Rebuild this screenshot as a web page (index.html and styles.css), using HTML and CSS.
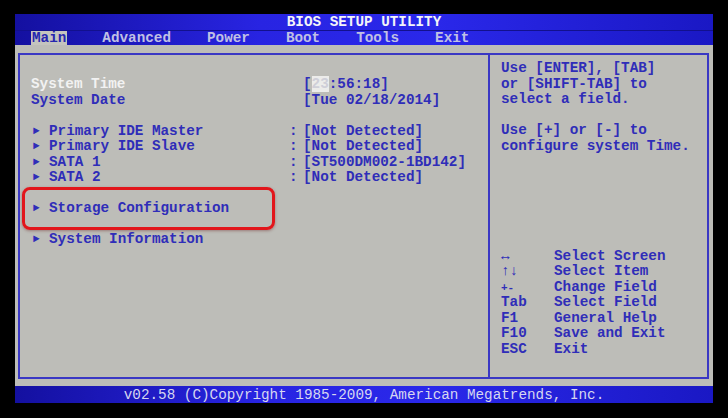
FILE: index.html
```html
<!DOCTYPE html>
<html>

<head>
    <title>BIOS Setup Utility</title>
    <link rel="stylesheet" href="styles.css">
</head>

<body>
    <div class="screen">
        <div class="title">BIOS SETUP UTILITY</div>
        <div class="menu">
            <span class="tab active">Main</span>
            <span class="tab">Advanced</span>
            <span class="tab">Power</span>
            <span class="tab">Boot</span>
            <span class="tab">Tools</span>
            <span class="tab">Exit</span>
        </div>

        <div class="main">
            <div class="frame">
                <div class="settings">
                    <div class="row">
                        <span class="label current">System Time</span>
                        <span class="sep"></span>
                        <span class="value">[<span class="field">23</span>:56:18]</span>
                    </div>
                    <div class="row">
                        <span class="label">System Date</span>
                        <span class="sep"></span>
                        <span class="value">[Tue 02/18/2014]</span>
                    </div>
                    <div class="gap"></div>
                    <div class="row">
                        <span class="label"><span class="arrow">&#9658;</span>Primary IDE Master</span>
                        <span class="sep">:</span>
                        <span class="value">[Not Detected]</span>
                    </div>
                    <div class="row">
                        <span class="label"><span class="arrow">&#9658;</span>Primary IDE Slave</span>
                        <span class="sep">:</span>
                        <span class="value">[Not Detected]</span>
                    </div>
                    <div class="row">
                        <span class="label"><span class="arrow">&#9658;</span>SATA 1</span>
                        <span class="sep">:</span>
                        <span class="value">[ST500DM002-1BD142]</span>
                    </div>
                    <div class="row">
                        <span class="label"><span class="arrow">&#9658;</span>SATA 2</span>
                        <span class="sep">:</span>
                        <span class="value">[Not Detected]</span>
                    </div>
                    <div class="gap"></div>
                    <div class="row marked">
                        <span class="label"><span class="arrow">&#9658;</span>Storage Configuration</span>
                        <span class="circle"></span>
                    </div>
                    <div class="gap"></div>
                    <div class="row">
                        <span class="label"><span class="arrow">&#9658;</span>System Information</span>
                    </div>
                </div>

                <div class="help">
                    <p>Use [ENTER], [TAB]<br>or [SHIFT-TAB] to<br>select a field.</p>
                    <p>Use [+] or [-] to<br>configure system Time.</p>

                    <ul class="keys">
                        <li><span class="key">&#8596;</span>Select Screen</li>
                        <li><span class="key">&#8593;&#8595;</span>Select Item</li>
                        <li><span class="key small">+-</span>Change Field</li>
                        <li><span class="key">Tab</span>Select Field</li>
                        <li><span class="key">F1</span>General Help</li>
                        <li><span class="key">F10</span>Save and Exit</li>
                        <li><span class="key">ESC</span>Exit</li>
                    </ul>
                </div>
            </div>
        </div>

        <div class="footer">v02.58 (C)Copyright 1985-2009, American Megatrends, Inc.</div>
    </div>
</body>

</html>
```

FILE: styles.css
```css
body {
    margin: 0;
    background-color: #000;
    font-family: "Liberation Mono", "DejaVu Sans Mono", monospace;
    font-weight: bold;
    font-size: 14.3px;
}

.screen {
    width: 698px;
    margin: 14px 0 0 15px;
}

.title,
.menu,
.footer {
    background: linear-gradient(90deg, #1410a0 0%, #2824e2 35%, #2a28ea 60%, #1a18c4 100%);
}

.title {
    height: 16px;
    line-height: 17px;
    text-align: center;
    color: #f4f4f8;
}

.menu {
    display: flex;
    gap: 34px;
    height: 15px;
    line-height: 15px;
    padding-left: 16px;
    color: #c0c0e4;
    border-top: 1px solid #12108e;
    box-sizing: border-box;
}

.tab {
    padding: 0 1px;
}

.tab.active {
    background-color: #c4c4be;
    color: #2626b0;
}

.main {
    height: 341px;
    padding: 8px 4px 7px 3px;
    box-sizing: border-box;
    background-color: #bdbdb8;
    display: flex;
}

.frame {
    flex: 1;
    display: flex;
    border: 2px solid #3a38c4;
    line-height: 15.5px;
    color: #2f2db8;
}

.settings {
    width: 470px;
    box-sizing: border-box;
    border-right: 2px solid #3a38c4;
    padding: 22px 0 0 11px;
}

.row {
    display: flex;
    height: 15.5px;
    white-space: pre;
    position: relative;
}

.gap {
    height: 15.5px;
}

.label {
    width: 258px;
}

.label.current {
    color: #f2f2f2;
}

.sep {
    width: 14px;
}

.arrow {
    display: inline-block;
    width: 16px;
    padding-left: 2px;
    font-size: 11px;
    vertical-align: 1px;
}

.field {
    background-color: #ececea;
    color: #cfcfd8;
}

.circle {
    position: absolute;
    left: -9px;
    top: -14px;
    width: 253px;
    height: 43px;
    box-sizing: border-box;
    border: 3px solid #e2161b;
    border-radius: 8px;
    box-shadow: 0 1px 3px rgba(90, 0, 0, 0.35);
}

.help {
    flex: 1;
    display: flex;
    flex-direction: column;
    padding: 6px 0 20px 11px;
}

.help p {
    margin: 0 0 15.5px 0;
}

.keys {
    list-style: none;
    margin: auto 0 0 0;
    padding: 0;
}

.keys li {
    height: 15.5px;
}

.key {
    display: inline-block;
    width: 53px;
}

.key.small {
    font-size: 11px;
}

.footer {
    height: 17px;
    line-height: 18px;
    text-align: center;
    color: #d6d6f0;
    font-weight: normal;
}
```
